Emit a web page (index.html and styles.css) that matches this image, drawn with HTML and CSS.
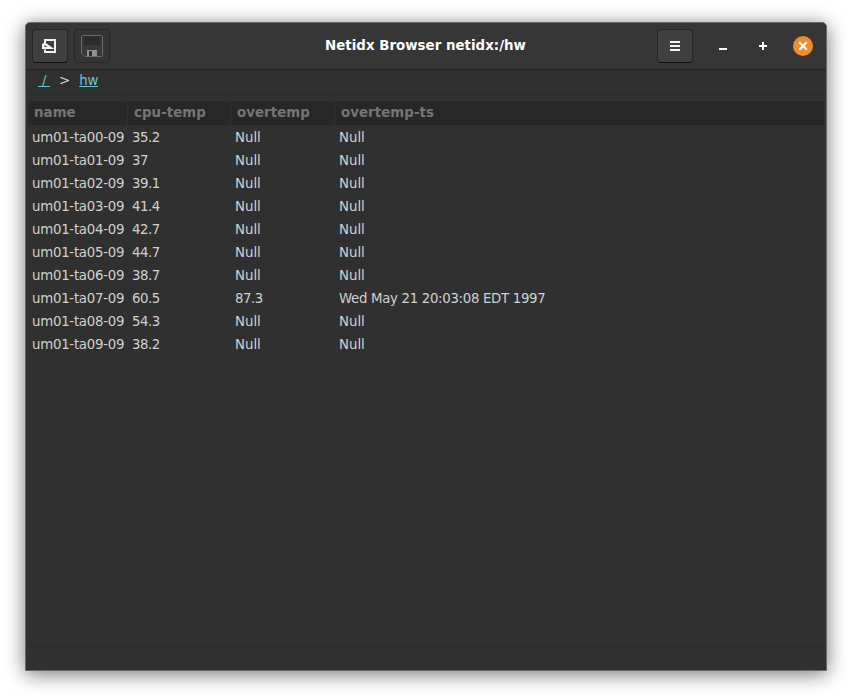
FILE: index.html
```
<!DOCTYPE html>
<html lang="en">
<head>
<meta charset="utf-8">
<title>Netidx Browser netidx:/hw</title>
<link rel="stylesheet" href="styles.css">
</head>
<body>
<main class="window">
  <header class="titlebar">
    <div class="side start">
      <button class="btn" aria-label="Go up">
        <svg width="16" height="16" viewBox="0 0 16 16"><path d="M3 5V2h10v12H3v-2.500" fill="none" stroke="#f2f2f2" stroke-width="2"/><path fill-rule="evenodd" d="M0 6L3 4.500L12 10.800V11H0zM2.500 7v2h3z" fill="#f2f2f2"/></svg>
      </button>
      <button class="btn disabled" aria-label="Save">
        <svg width="24" height="24" viewBox="0 0 24 24"><path d="M1.500 2.500q0-1 1-1h19q1 0 1 1v19q0 1-1 1H5L1.500 19z" fill="#383838" stroke="#6c6c6c"/><path d="M4 2h16v8q0 1-1 1H5q-1 0-1-1z" fill="#2c2c2c"/><path d="M7 16h10v6H7z" fill="#929292"/><path d="M9 17h3v5H9z" fill="#303030"/></svg>
      </button>
    </div>
    <h1 class="title">Netidx Browser netidx:/hw</h1>
    <div class="side end">
      <button class="btn" aria-label="Menu">
        <svg width="16" height="16" viewBox="0 0 16 16"><path d="M3 3h10v2H3zM3 7h10v2H3zM3 11h10v2H3z" fill="#f2f2f2"/></svg>
      </button>
      <button class="ctl" aria-label="Minimize">
        <svg width="16" height="16" viewBox="0 0 16 16"><path d="M4 10h8v2H4z" fill="#fff"/></svg>
      </button>
      <button class="ctl" aria-label="Maximize">
        <svg width="16" height="16" viewBox="0 0 16 16"><path d="M7 4h2v3h3v2H9v3H7V9H4V7h3z" fill="#fff"/></svg>
      </button>
      <button class="ctl close" aria-label="Close">
        <svg width="16" height="16" viewBox="0 0 16 16"><path d="M5 5l6 6M11 5l-6 6" stroke="#fff" stroke-width="2.200" stroke-linecap="square"/></svg>
      </button>
    </div>
  </header>
  <nav class="path"><a>&nbsp;/&nbsp;</a><span>&gt;</span><a>hw</a></nav>
  <section class="content">
    <table>
      <colgroup><col class="c1"><col class="c2"><col class="c3"><col></colgroup>
      <thead><tr><th>name</th><th>cpu-temp</th><th>overtemp</th><th>overtemp-ts</th></tr></thead>
      <tbody>
        <tr><td class="name">um01-ta00-09</td><td class="num">35.2</td><td>Null</td><td>Null</td></tr>
        <tr><td class="name">um01-ta01-09</td><td class="num">37</td><td>Null</td><td>Null</td></tr>
        <tr><td class="name">um01-ta02-09</td><td class="num">39.1</td><td>Null</td><td>Null</td></tr>
        <tr><td class="name">um01-ta03-09</td><td class="num">41.4</td><td>Null</td><td>Null</td></tr>
        <tr><td class="name">um01-ta04-09</td><td class="num">42.7</td><td>Null</td><td>Null</td></tr>
        <tr><td class="name">um01-ta05-09</td><td class="num">44.7</td><td>Null</td><td>Null</td></tr>
        <tr><td class="name">um01-ta06-09</td><td class="num">38.7</td><td>Null</td><td>Null</td></tr>
        <tr><td class="name">um01-ta07-09</td><td class="num">60.5</td><td class="num">87.3</td><td class="date">Wed May 21 20:03:08 EDT 1997</td></tr>
        <tr><td class="name">um01-ta08-09</td><td class="num">54.3</td><td>Null</td><td>Null</td></tr>
        <tr><td class="name">um01-ta09-09</td><td class="num">38.2</td><td>Null</td><td>Null</td></tr>
      </tbody>
    </table>
  </section>
  <footer class="status"></footer>
</main>
</body>
</html>
```
FILE: styles.css
```
* { box-sizing: border-box; }
body {
  margin: 0;
  height: 699px;
  padding: 22px 25px 28px;
  background: #fff;
  overflow: hidden;
  font: 13.333px/16px "DejaVu Sans", sans-serif;
  color: #d0d0d0;
}
.window {
  display: flex;
  flex-direction: column;
  height: 649px;
  background: #303030;
  border: 1px solid #6b6b6b;
  border-radius: 5px 5px 0 0;
  box-shadow: 0 3px 20px rgba(0, 0, 0, .55);
}
.titlebar {
  display: grid;
  grid-template-columns: 1fr auto 1fr;
  align-items: center;
  height: 47px;
  padding: 0 6px;
  background: #363636;
  border-bottom: 1px solid #222;
  border-radius: 4px 4px 0 0;
}
.side { display: flex; align-items: center; }
.start { gap: 6px; }
.end { justify-content: flex-end; padding-right: 7px; }
.title { margin: 0; padding-right: 1px; font-size: 13.333px; line-height: 16px; letter-spacing: .04px; color: #fff; }
button { display: flex; align-items: center; justify-content: center; padding: 0; border: 0; background: none; }
.btn {
  width: 36px;
  height: 34px;
  border: 1px solid #272727;
  border-bottom-color: #101010;
  border-radius: 4px;
  background: #404040;
}
.btn.disabled { background: #353535; border-color: #272727; }
.ctl { width: 20px; height: 20px; margin-left: 20px; }
.close { border-radius: 50%; background: #f28c2b; }
.path {
  display: flex;
  height: 25px;
  padding: 3px 0 0 12px;
  border-bottom: 1px solid #2b2b2b;
}
.path a { color: #66c4cf; text-decoration: underline; letter-spacing: -.3px; }
.path span { margin: 0 9px; }
.content { flex: 1; padding: 6px 2px 0; }
table { width: 796px; table-layout: fixed; border-collapse: separate; border-spacing: 0; }
.c1 { width: 100px; }
.c2 { width: 103px; }
.c3 { width: 104px; }
th {
  height: 24px;
  padding: 0 6px 1px;
  background: #272727;
  border-right: 1px solid #303030;
  color: #757575;
  letter-spacing: .08px;
  text-align: left;
}
th:last-child { border-right: 0; }
td { height: 23px; padding: 2px 4px 0; white-space: nowrap; letter-spacing: -.02px; }
.name { letter-spacing: -.26px; }
.num { letter-spacing: -.48px; }
.date { letter-spacing: -.32px; }
.status { height: 24px; margin: 0 2px; border-top: 1px solid #2b2b2b; }
```
